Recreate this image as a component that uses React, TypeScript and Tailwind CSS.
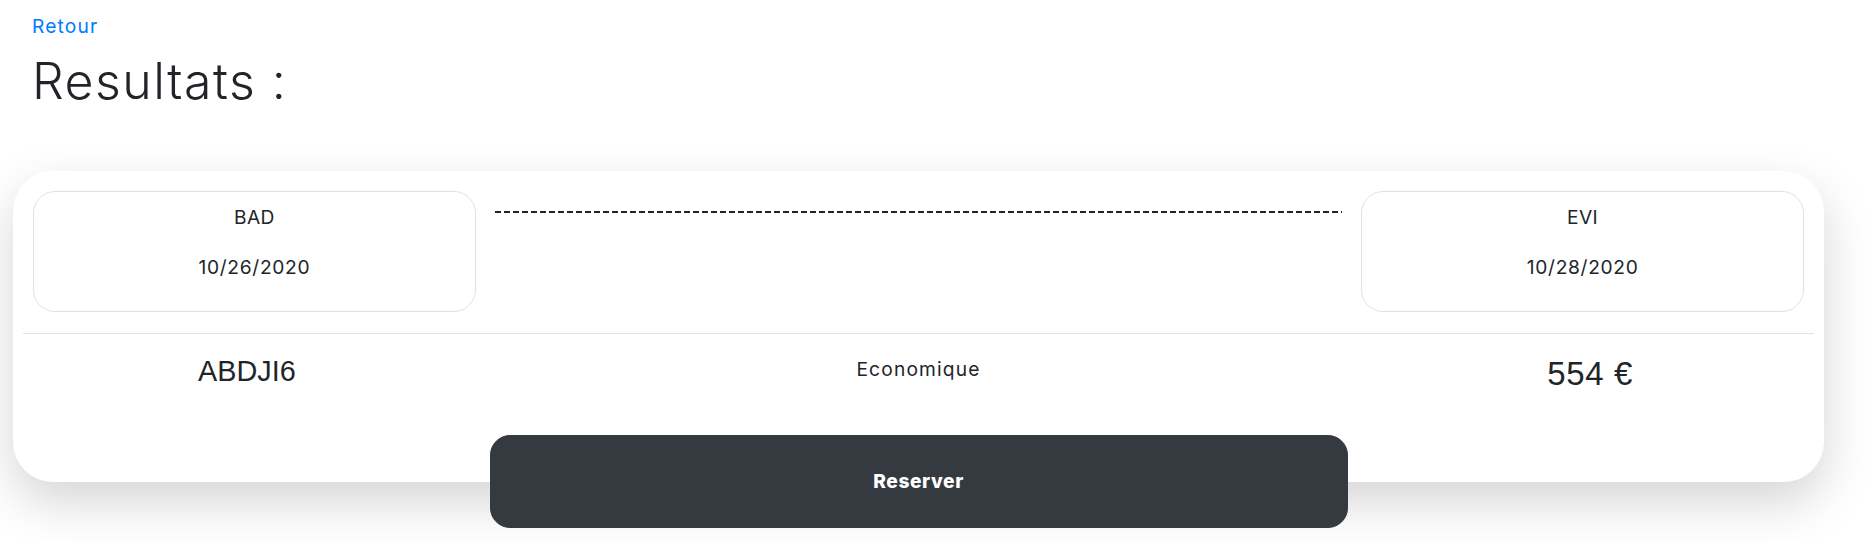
import React from "react";

type Stop = { code: string; date: string };

const depart: Stop = { code: "BAD", date: "10/26/2020" };
const arrivee: Stop = { code: "EVI", date: "10/28/2020" };

function StopBox({ stop }: { stop: Stop }) {
  return (
    <div className="flex h-[121px] flex-col items-center rounded-[22px] border border-[#e0e1e5] pt-[11px]">
      <p className="text-[19.2px] leading-[28.8px] tracking-[0.02em]">{stop.code}</p>
      <p className="mt-[21px] text-[19.2px] leading-[28.8px] tracking-[0.035em]">{stop.date}</p>
    </div>
  );
}

export default function App() {
  return (
    <div className="min-h-[542px] bg-white font-['Inter',sans-serif] text-[#212529]">
      {/* Header */}
      <div className="px-[32px] pt-[12px]">
        <a href="#" className="block w-fit text-[19.2px] leading-[28.8px] tracking-[0.06em] text-[#007bff]">
          Retour
        </a>
        <h1 className="mt-[10px] text-[50px] font-light leading-[1.2] tracking-[0.03em]">Resultats :</h1>
      </div>

      {/* Result card */}
      <div className="ml-[13px] mt-[60px] flex w-[1811px] flex-col rounded-[40px] bg-white px-[20px] pt-[20px] shadow-[0_20px_50px_rgba(0,0,0,0.17)]">
        <div className="grid grid-cols-[1fr_2fr_1fr]">
          <StopBox stop={depart} />
          <div className="mx-[19px] mt-[20px] h-[2px] bg-[repeating-linear-gradient(90deg,#212529_0_6px,transparent_6px_9px)]" />
          <StopBox stop={arrivee} />
        </div>

        <div className="-mx-[10px] mt-[21px] h-px bg-[#e3e3e5]" />

        <div className="-mx-[10px] grid grid-cols-[1fr_2fr_1fr] items-start pt-[20px] text-center">
          <div className="font-['Liberation_Sans',Arial,sans-serif] text-[28.8px] leading-[1.2]">ABDJI6</div>
          <div className="pt-[1px] text-[19.2px] leading-[28.8px] tracking-[0.06em]">Economique</div>
          <div className="font-['Liberation_Sans',Arial,sans-serif] text-[33px] leading-[1.2] tracking-[0.02em]">554 €</div>
        </div>

        <button className="-mb-[46px] mt-[42px] flex h-[93px] w-[858px] items-center justify-center self-center rounded-[20px] border border-[#343a40] bg-[#343a40] text-[19.2px] font-extrabold tracking-[0.03em] text-white">
          Reserver
        </button>
      </div>
    </div>
  );
}
